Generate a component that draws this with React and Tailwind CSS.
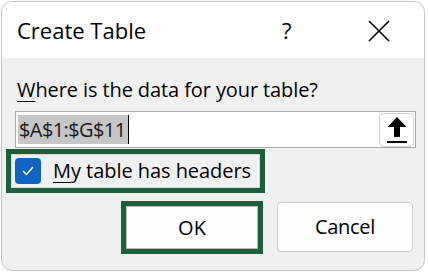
const font = { fontFamily: '"Open Sans", "Noto Sans", "Liberation Sans", sans-serif' }

const UploadArrow = () => (
  <svg width="22" height="28" viewBox="0 0 22 28">
    <path d="M11 1 L20.5 11 L14 11 L14 21 L8 21 L8 11 L1.5 11 Z" fill="#000" />
    <rect x="1" y="25" width="20" height="2" fill="#000" />
  </svg>
)

const CheckMark = () => (
  <svg width="14" height="14" viewBox="0 0 14 14">
    <path d="M2.5 7.5 L5.5 10.5 L11.5 3.5" fill="none" stroke="#fff" strokeWidth="1.4" strokeLinecap="round" strokeLinejoin="round" />
  </svg>
)

const CloseIcon = () => (
  <svg width="22" height="22" viewBox="0 0 22 22">
    <path d="M1 1 L21 21 M21 1 L1 21" stroke="#000" strokeWidth="1.6" />
  </svg>
)

export default function App() {
  return (
    <div className="w-[428px] h-[272px] bg-white pl-[1px] pt-[1px] overflow-hidden" style={font}>
      <div className="w-[424px] h-[270px] rounded-[11px] border border-[#c4c4c4] bg-[#f0f0f0] overflow-hidden flex flex-col">
        {/* title bar */}
        <div className="h-[56px] bg-white flex items-center shrink-0">
          <span className="ml-[15px] text-[22px] text-black">Create Table</span>
          <span className="ml-[136px] text-[22px] text-black">?</span>
          <span className="ml-[76px] mt-[1px]"><CloseIcon /></span>
        </div>

        {/* body */}
        <div className="flex flex-col">
          <div className="ml-[15px] mt-[19px] text-[20px] leading-[26px] text-black tracking-[-0.1px]">
            <span className="underline underline-offset-[4px] decoration-[1px]">W</span>here is the data for your table?
          </div>

          <div className="ml-[13px] mt-[8px] w-[401px] h-[37px] bg-white border border-[#a9a9a9] flex items-center pl-[2px] pr-[1px]">
            <div className="h-[29px] bg-[#c6c6c6] flex items-center pl-[1px] pr-[2px]">
              <span className="text-[20px] text-[#1a1a1a] tracking-[-0.6px]">$A$1:$G$11</span>
            </div>
            <div className="w-[1px] h-[29px] bg-black" />
            <div className="ml-auto w-[35px] h-[34px] rounded-[4px] border border-[#d4d4d4] bg-white flex items-center justify-center">
              <UploadArrow />
            </div>
          </div>

          <div className="ml-[4px] mt-[1px] w-[259px] h-[44px] border-[5px] border-[#1d5f3c] flex items-center">
            <div className="w-full h-full border border-[#d8d8d8] flex items-center">
              <div className="ml-[3px] w-[26px] h-[26px] rounded-[4px] bg-[#0f64c1] flex items-center justify-center">
                <CheckMark />
              </div>
              <span className="ml-[12px] text-[20px] text-black tracking-[-0.05px]">
                <span className="underline underline-offset-[4px] decoration-[1px]">M</span>y table has headers
              </span>
            </div>
          </div>

          <div className="mt-[8px] flex items-start">
            <div className="ml-[119px] w-[142px] h-[53px] border-[5px] border-[#1d5f3c]">
              <div className="w-full h-full border border-[#b9b9b9] bg-[#fdfdfd] flex items-center justify-center">
                <span className="text-[20px] text-black">OK</span>
              </div>
            </div>
            <div className="ml-[14px] mt-[1px] w-[136px] h-[50px] rounded-[4px] border border-[#d0d0d0] bg-[#fdfdfd] flex items-center justify-center">
              <span className="text-[20px] text-black tracking-[-0.3px]">Cancel</span>
            </div>
          </div>
        </div>
      </div>
    </div>
  )
}
